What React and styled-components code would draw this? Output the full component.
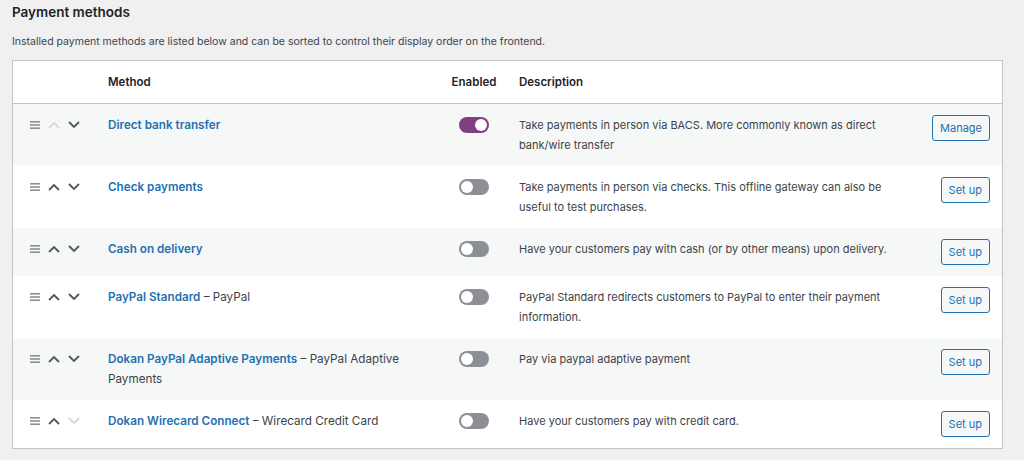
import React from 'react';
import styled, { createGlobalStyle } from 'styled-components';

const GlobalStyle = createGlobalStyle`
  html, body {
    margin: 0;
    padding: 0;
    background: #f0f0f1;
  }
  body {
    font-family: Inter, "Liberation Sans", sans-serif;
    color: #3c434a;
  }
`;

const Page = styled.div`
  padding: 0 21px 0 12px;
`;

const Title = styled.h2`
  margin: 0;
  font-size: 13.5px;
  line-height: 24px;
  font-weight: 600;
  color: #1d2327;
`;

const Intro = styled.p`
  margin: 9px 0 9px;
  font-size: 10.5px;
  line-height: 18px;
  color: #3c434a;
`;

const Table = styled.div`
  background: #fff;
  border: 1px solid #c3c4c7;
`;

const Row = styled.div`
  display: grid;
  grid-template-columns: 95px 336px 60px 1fr 102px;
  align-items: start;
  padding: 11px 0;
  background: ${(p) => (p.$striped ? '#f6f7f7' : '#fff')};
`;

const HeadRow = styled(Row)`
  border-bottom: 1px solid #c3c4c7;
  font-size: 11.5px;
  line-height: 20px;
  font-weight: 600;
  color: #1d2327;
`;

const HeadCell = styled.div`
  text-align: ${(p) => p.$align || 'left'};
  padding-left: ${(p) => p.$pad || 0}px;
`;

const Sort = styled.div`
  display: flex;
  align-items: center;
  gap: 8px;
  height: 20px;
  padding-left: 17px;
`;

const Method = styled.div`
  font-size: 11.7px;
  line-height: 20px;
  color: #3c434a;
  padding-right: 12px;
`;

const MethodLink = styled.a`
  color: #2271b1;
  font-weight: 600;
  text-decoration: none;
`;

const ToggleCell = styled.div`
  display: flex;
  justify-content: center;
  height: 20px;
  align-items: center;
`;

const Toggle = styled.span`
  position: relative;
  display: inline-block;
  width: 30px;
  height: 16px;
  border-radius: 8px;
  background: ${(p) => (p.$on ? '#7f3f82' : '#8c8f94')};

  &::after {
    content: '';
    position: absolute;
    top: 2px;
    left: ${(p) => (p.$on ? '16px' : '2px')};
    width: 12px;
    height: 12px;
    border-radius: 50%;
    background: #fff;
  }
`;

const Desc = styled.div`
  font-size: 11px;
  line-height: 20px;
  color: #3c434a;
  padding-left: 15px;
`;

const Action = styled.div`
  display: flex;
  justify-content: flex-end;
  padding-right: 12px;
`;

const Button = styled.button`
  height: 26px;
  padding: 0 7px;
  font-family: inherit;
  font-size: 11px;
  color: #2271b1;
  background: #f6f7f7;
  border: 1px solid #2271b1;
  border-radius: 3px;
  cursor: pointer;
`;

const Icon = styled.svg`
  display: block;
  flex: none;
`;

function Handle() {
  return (
    <Icon width="10" height="8" viewBox="0 0 10 8">
      <rect x="0" y="0" width="10" height="1.6" fill="#8c8f94" />
      <rect x="0" y="3.2" width="10" height="1.6" fill="#8c8f94" />
      <rect x="0" y="6.4" width="10" height="1.6" fill="#8c8f94" />
    </Icon>
  );
}

function Chevron({ up, disabled }) {
  return (
    <Icon width="12" height="8" viewBox="0 0 12 8">
      <path
        d={up ? 'M1 7 L6 2 L11 7' : 'M1 1 L6 6 L11 1'}
        fill="none"
        stroke={disabled ? '#d7d8da' : '#50575e'}
        strokeWidth="1.8"
      />
    </Icon>
  );
}

const methods = [
  {
    name: 'Direct bank transfer',
    enabled: true,
    desc: 'Take payments in person via BACS. More commonly known as direct bank/wire transfer',
    action: 'Manage',
  },
  {
    name: 'Check payments',
    desc: 'Take payments in person via checks. This offline gateway can also be useful to test purchases.',
  },
  {
    name: 'Cash on delivery',
    desc: 'Have your customers pay with cash (or by other means) upon delivery.',
  },
  {
    name: 'PayPal Standard',
    sub: 'PayPal',
    desc: 'PayPal Standard redirects customers to PayPal to enter their payment information.',
  },
  {
    name: 'Dokan PayPal Adaptive Payments',
    sub: 'PayPal Adaptive Payments',
    desc: 'Pay via paypal adaptive payment',
  },
  {
    name: 'Dokan Wirecard Connect',
    sub: 'Wirecard Credit Card',
    desc: 'Have your customers pay with credit card.',
  },
];

export default function App() {
  return (
    <Page>
      <GlobalStyle />
      <Title>Payment methods</Title>
      <Intro>
        Installed payment methods are listed below and can be sorted to control their display order on the frontend.
      </Intro>
      <Table>
        <HeadRow>
          <HeadCell />
          <HeadCell>Method</HeadCell>
          <HeadCell $align="center">Enabled</HeadCell>
          <HeadCell $pad={15}>Description</HeadCell>
          <HeadCell />
        </HeadRow>
        {methods.map((m, i) => (
          <Row key={m.name} $striped={i % 2 === 0}>
            <Sort>
              <Handle />
              <Chevron up disabled={i === 0} />
              <Chevron disabled={i === methods.length - 1} />
            </Sort>
            <Method>
              <MethodLink href="#">{m.name}</MethodLink>
              {m.sub && <> – {m.sub}</>}
            </Method>
            <ToggleCell>
              <Toggle $on={m.enabled} />
            </ToggleCell>
            <Desc>{m.desc}</Desc>
            <Action>
              <Button>{m.action || 'Set up'}</Button>
            </Action>
          </Row>
        ))}
      </Table>
    </Page>
  );
}
